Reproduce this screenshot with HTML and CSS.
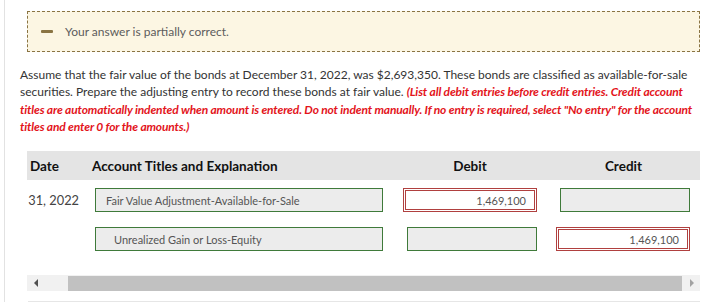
FILE: index.html
```html
<!DOCTYPE html>
<html lang="en">

<head>
  <meta charset="utf-8">
  <title>Journal entry</title>
  <link rel="stylesheet" href="styles.css">
</head>

<body>
  <div class="page">
    <!-- feedback -->
    <div class="feedback">
      <span class="feedback-icon"></span>
      <span>Your answer is partially correct.</span>
    </div>

    <p class="question">
      Assume that the fair value of the bonds at December 31, 2022, was $2,693,350. These bonds are classified as available-for-sale
      securities. Prepare the adjusting entry to record these bonds at fair value.
      <em class="hint">(List all debit entries before credit entries. Credit account titles are automatically indented when amount is entered. Do not indent manually. If no entry is required, select "No entry" for the account titles and enter 0 for the amounts.)</em>
    </p>

    <!-- journal table -->
    <div class="journal">
      <div class="row head">
        <div class="col-date">Date</div>
        <div class="col-account">Account Titles and Explanation</div>
        <div class="col-debit">Debit</div>
        <div class="col-credit">Credit</div>
      </div>

      <div class="row entry">
        <div class="col-date"><span>Dec. 31, 2022</span></div>
        <div class="col-account">
          <div class="field good">Fair Value Adjustment-Available-for-Sale</div>
        </div>
        <div class="col-debit">
          <div class="field amount wrong">1,469,100</div>
        </div>
        <div class="col-credit">
          <div class="field amount good"></div>
        </div>
      </div>

      <div class="row entry">
        <div class="col-date"></div>
        <div class="col-account">
          <div class="field good indent">Unrealized Gain or Loss-Equity</div>
        </div>
        <div class="col-debit">
          <div class="field amount good"></div>
        </div>
        <div class="col-credit">
          <div class="field amount wrong">1,469,100</div>
        </div>
      </div>

      <div class="scrollbar">
        <span class="arrow arrow-left"></span>
        <span class="thumb"></span>
        <span class="arrow arrow-right"></span>
      </div>
      <div class="next-line"></div>
    </div>
  </div>
</body>

</html>
```

FILE: styles.css
```css
body {
  margin: 0;
  background: #fff;
  font-family: Lato, "Open Sans", sans-serif;
  color: #333;
}

.page {
  margin-left: 4px;
  border-left: 1px solid #e2e2e2;
  padding: 11px 16px 0 15px;
  height: 291px;
}

.feedback {
  margin-left: 7px;
  height: 39px;
  display: flex;
  align-items: center;
  gap: 12px;
  padding-left: 13px;
  background: #fcf6e3;
  border: 1px dashed #8a7443;
  font-size: 12px;
  color: #5c5c5c;
}

.feedback-icon {
  width: 12px;
  height: 3px;
  background: #8a7443;
  border-radius: 1px;
}

.question {
  margin: 14px 0 0 0;
  width: 684px;
  font-size: 12px;
  line-height: 17.3px;
  color: #333;
}

.hint {
  color: #e3141b;
  font-weight: 700;
  letter-spacing: -0.15px;
}

.journal {
  margin: 16px 0 0 7px;
  width: 673px;
}

.row {
  display: flex;
}

.col-date {
  width: 62px;
}

.col-account {
  width: 304px;
}

.col-debit {
  width: 154px;
}

.col-credit {
  width: 153px;
}

.head {
  height: 29px;
  align-items: center;
  background: #e4e4e4;
  font-size: 13.5px;
  font-weight: 700;
  color: #111;
}

.head .col-date {
  padding-left: 3px;
  width: 59px;
}

.head .col-account {
  padding-left: 3px;
  width: 301px;
}

.head .col-debit,
.head .col-credit {
  text-align: center;
}

.entry {
  height: 24px;
  align-items: center;
  margin-top: 8px;
}

.entry + .entry {
  margin-top: 15px;
}

.entry .col-date {
  display: flex;
  justify-content: flex-end;
  overflow: hidden;
  white-space: nowrap;
  padding-right: 10px;
  width: 52px;
  font-size: 12.8px;
  color: #444;
}

.entry .col-debit,
.entry .col-credit {
  display: flex;
  justify-content: flex-end;
  padding-right: 10px;
}

.entry .col-debit {
  width: 144px;
}

.entry .col-credit {
  width: 143px;
}

.field {
  box-sizing: border-box;
  height: 24px;
  display: flex;
  align-items: center;
  font-size: 11px;
  color: #555;
}

.col-account .field {
  margin-left: 6px;
  width: 288px;
  padding-left: 10px;
}

.col-account .field.indent {
  padding-left: 18px;
}

.field.good {
  background: #ececec;
  border: 1px solid #3f7a3a;
}

.field.amount {
  width: 130px;
  justify-content: flex-end;
  padding-right: 8px;
}

.field.wrong {
  width: 134px;
  background: #fff;
  border: 3px double #b0403f;
}

.scrollbar {
  margin-top: 24px;
  height: 16px;
  display: flex;
  align-items: center;
  background: #f1f1f1;
}

.arrow {
  width: 0;
  height: 0;
  border-top: 4px solid transparent;
  border-bottom: 4px solid transparent;
}

.arrow-left {
  margin: 0 0 0 7px;
  border-right: 4px solid #505050;
}

.arrow-right {
  margin: 0 6px 0 8px;
  border-left: 4px solid #a3a3a3;
}

.thumb {
  margin-left: 30px;
  flex: 1;
  height: 15px;
  background: #c1c1c1;
}

.next-line {
  margin: 10px 0 0 1px;
  border-top: 2px solid #e6e6e6;
}
```
